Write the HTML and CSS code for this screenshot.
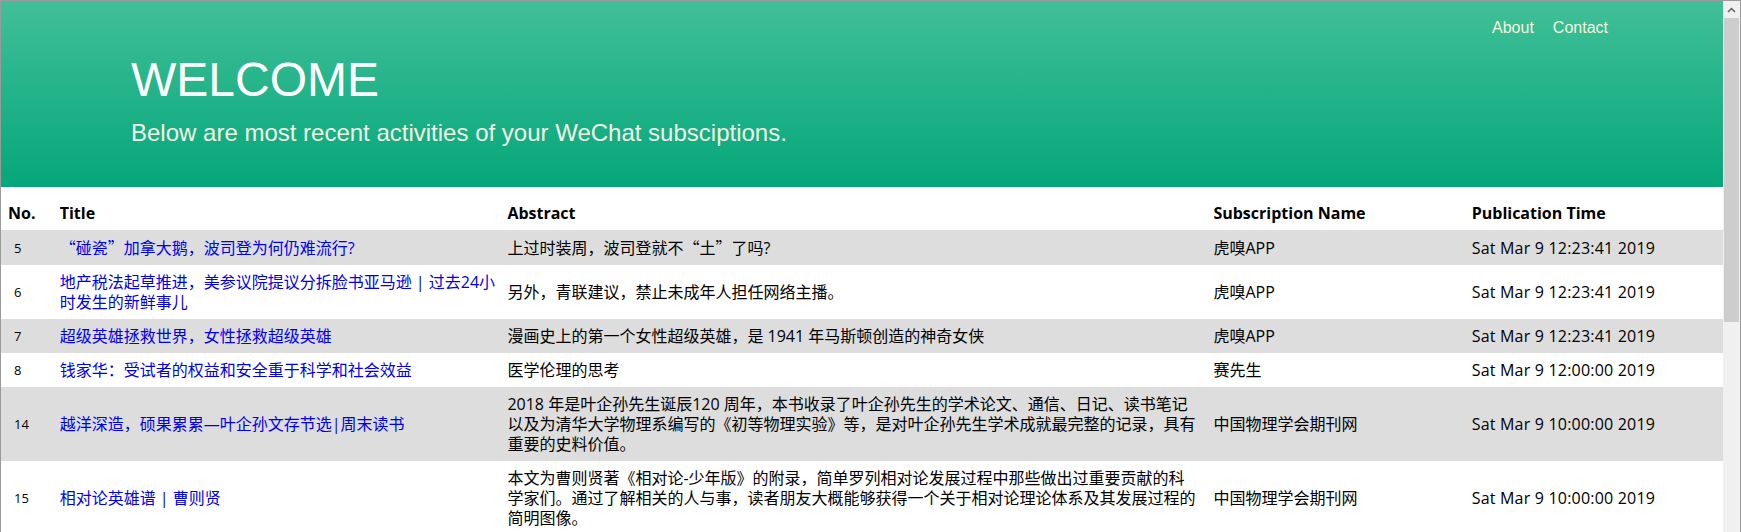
FILE: index.html
```html
<!DOCTYPE html>
<html lang="zh-CN">
<head>
<meta charset="utf-8">
<title>WeChat Subscriptions</title>
<link rel="stylesheet" href="styles.css">
</head>
<body>
<div class="window">
  <div class="viewport">
    <header class="hero">
      <nav class="nav">
        <a href="#">About</a>
        <a href="#">Contact</a>
      </nav>
      <h1>WELCOME</h1>
      <p>Below are most recent activities of your WeChat subsciptions.</p>
    </header>
    <table class="feed">
      <colgroup>
        <col class="c-no"><col class="c-title"><col class="c-abs"><col class="c-sub"><col class="c-time">
      </colgroup>
      <thead>
        <tr><th>No.</th><th>Title</th><th>Abstract</th><th>Subscription Name</th><th>Publication Time</th></tr>
      </thead>
      <tbody>
        <tr>
          <td class="num">5</td>
          <td><a href="#"><span class="cjk">“</span>碰瓷<span class="cjk">”</span>加拿大鹅，波司登为何仍难流行?</a></td>
          <td>上过时装周，波司登就不<span class="cjk">“</span>土<span class="cjk">”</span>了吗?</td>
          <td>虎嗅APP</td>
          <td class="time">Sat Mar 9 12:23:41 2019</td>
        </tr>
        <tr>
          <td class="num">6</td>
          <td class="lines"><a href="#">地产税法起草推进，美参议院提议分拆脸书亚马逊 | 过去24小<br>时发生的新鲜事儿</a></td>
          <td>另外，青联建议，禁止未成年人担任网络主播。</td>
          <td>虎嗅APP</td>
          <td class="time">Sat Mar 9 12:23:41 2019</td>
        </tr>
        <tr>
          <td class="num">7</td>
          <td><a href="#">超级英雄拯救世界，女性拯救超级英雄</a></td>
          <td>漫画史上的第一个女性超级英雄，是 1941 年马斯顿创造的神奇女侠</td>
          <td>虎嗅APP</td>
          <td class="time">Sat Mar 9 12:23:41 2019</td>
        </tr>
        <tr>
          <td class="num">8</td>
          <td><a href="#">钱家华：受试者的权益和安全重于科学和社会效益</a></td>
          <td>医学伦理的思考</td>
          <td>赛先生</td>
          <td class="time">Sat Mar 9 12:00:00 2019</td>
        </tr>
        <tr>
          <td class="num">14</td>
          <td><a href="#">越洋深造，硕果累累—叶企孙文存节选|周末读书</a></td>
          <td class="lines">2018 年是叶企孙先生诞辰120 周年，本书收录了叶企孙先生的学术论文、通信、日记、读书笔记<br>以及为清华大学物理系编写的《初等物理实验》等，是对叶企孙先生学术成就最完整的记录，具有<br>重要的史料价值。</td>
          <td>中国物理学会期刊网</td>
          <td class="time">Sat Mar 9 10:00:00 2019</td>
        </tr>
        <tr>
          <td class="num">15</td>
          <td><a href="#">相对论英雄谱 | 曹则贤</a></td>
          <td class="lines">本文为曹则贤著《相对论-少年版》的附录，简单罗列相对论发展过程中那些做出过重要贡献的科<br>学家们。通过了解相关的人与事，读者朋友大概能够获得一个关于相对论理论体系及其发展过程的<br>简明图像。</td>
          <td>中国物理学会期刊网</td>
          <td class="time">Sat Mar 9 10:00:00 2019</td>
        </tr>
      </tbody>
    </table>
  </div>
  <div class="scrollbar">
    <div class="sb-up">
      <svg width="9" height="6" viewBox="0 0 9 6"><path d="M1 5 L4.5 1.5 L8 5" fill="none" stroke="#606060" stroke-width="1.5"/></svg>
    </div>
    <div class="sb-thumb"></div>
  </div>
</div>
</body>
</html>
```

FILE: styles.css
```css
html, body {
  margin: 0;
  height: 100%;
  overflow: hidden;
  background: #fff;
}

.window {
  display: flex;
  height: 100vh;
  box-sizing: border-box;
  border-top: 1px solid #9a9a9a;
  border-left: 1px solid #9a9a9a;
  border-right: 1px solid #9a9a9a;
}

.viewport {
  flex: 1;
  min-width: 0;
  overflow: hidden;
}

.scrollbar {
  flex: none;
  width: 17px;
  background: #f0f0f0;
  display: flex;
  flex-direction: column;
}

.sb-up {
  height: 17px;
  display: flex;
  align-items: center;
  justify-content: center;
}

.sb-thumb {
  height: 304px;
  margin: 0 1px;
  background: #cdcdcd;
}

.hero {
  background: linear-gradient(#41bf98, #05a77a);
  padding: 18px 115px 40px 130px;
  color: #fff;
  font-family: "Liberation Sans", Arial, sans-serif;
}

.nav {
  display: flex;
  justify-content: flex-end;
  gap: 19px;
  font-size: 16px;
  line-height: 18px;
}

.nav a {
  color: #f5f5dc;
  text-decoration: none;
}

.hero h1 {
  margin: 15px 0 0;
  font-size: 48px;
  line-height: 55px;
  font-weight: normal;
}

.hero p {
  margin: 12px 0 0;
  font-size: 24px;
  line-height: 28px;
  color: #f3f3e4;
}

.feed {
  width: 100%;
  margin-top: 9px;
  border-collapse: collapse;
  table-layout: fixed;
  font-family: "Open Sans", "Noto Sans CJK SC", sans-serif;
  font-size: 16px;
  line-height: 20px;
  color: #000;
}

.c-no { width: 3%; }
.c-title { width: 26%; }
.c-abs { width: 41%; }
.c-sub { width: 15%; }
.c-time { width: 15%; }

.feed th,
.feed td {
  padding: 7px 7px;
  text-align: left;
  vertical-align: middle;
}

.feed th {
  font-weight: bold;
}

.feed tbody tr:nth-child(odd) {
  background: #dddddd;
}

.feed td.num {
  font-size: 13px;
  padding-left: 13px;
}

.feed td.time {
  letter-spacing: 0.2px;
}

.feed a {
  color: #0000ee;
  text-decoration: none;
}

.cjk {
  font-family: "Noto Sans CJK SC", sans-serif;
}

.lines {
  white-space: nowrap;
}
```
